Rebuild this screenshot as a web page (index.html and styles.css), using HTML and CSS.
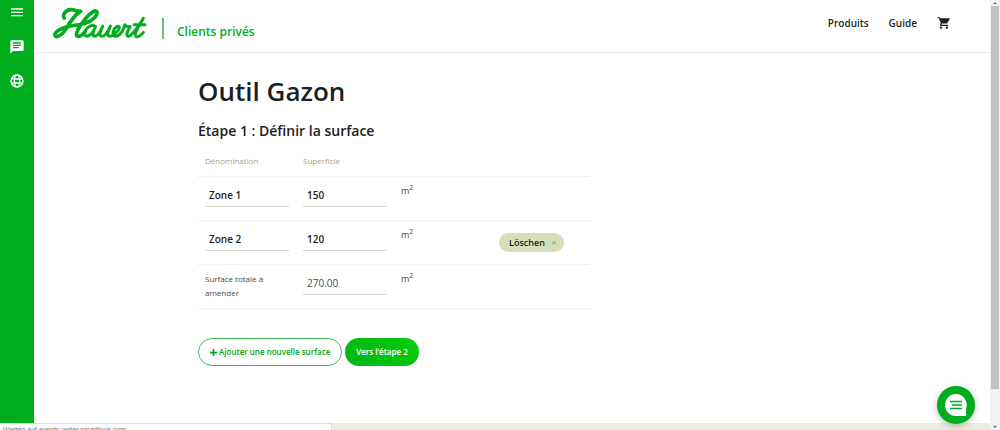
FILE: index.html
```html
<!DOCTYPE html>
<html lang="fr">
<head>
<meta charset="utf-8">
<title>Outil Gazon</title>
<link rel="stylesheet" href="styles.css">
</head>
<body>
<div class="app">
  <nav class="rail" aria-label="Menu">
    <button class="icon-btn" type="button" aria-label="Menu"><svg viewBox="0 0 24 24"><path d="M3 5h18v2H3zm0 5h18v2H3zm0 5h18v2H3z"/></svg></button>
    <button class="icon-btn" type="button" aria-label="Messages"><svg viewBox="0 0 24 24"><path d="M20 2H4c-1.100 0-2 .9-2 2v18l4-4h14c1.100 0 2-.9 2-2V4c0-1.100-.9-2-2-2zM6 5h12v2H6zm0 3.500h12v2H6zM6 12h9v2H6z"/></svg></button>
    <button class="icon-btn" type="button" aria-label="Langue"><svg viewBox="0 0 24 24" class="line"><circle cx="12" cy="12" r="9"/><ellipse cx="12" cy="12" rx="4" ry="9"/><path d="M4 9h16M4 15h16"/></svg></button>
  </nav>
  <div class="page">
    <header class="top">
      <a class="brand" href="#" aria-label="Hauert">
        <svg class="logo" viewBox="158 21 285 98">
          <path class="heavy" d="M240 34C222 46 208 68 197 87C187 105 168 114 164 107C160 98 180 84 204 79C230 74 262 74 282 54C298 38 292 27 280 34C260 46 246 68 234 88"/>
          <path class="heavy" d="M192 54C186 42 196 29 212 28C224 27 230 35 242 33M234 88C227 102 227 110 236 109C244 108 250 102 255 95"/>
          <path d="M286 79C276 72 262 80 256 92C250 106 258 112 268 106C276 101 282 92 287 79C280 94 276 108 284 109C293 109 302 94 309 78C301 93 297 108 305 109C314 110 325 94 332 78C324 94 321 108 328 109C338 109 360 92 359 82C357 73 344 82 341 94C337 110 348 112 358 105C366 99 372 88 376 74C379 80 386 80 392 79C383 94 378 108 386 109C396 109 420 76 432 54C420 74 402 104 410 110C416 112 426 104 432 97M404 74H437"/>
        </svg>
      </a>
      <a class="section" href="#">Clients privés</a>
      <nav class="links"><a href="#">Produits</a><a href="#">Guide</a>
        <a class="cart" href="#" aria-label="Panier"><svg viewBox="0 0 24 24"><path d="M7 18c-1.100 0-2 .9-2 2s.9 2 2 2 2-.9 2-2-.9-2-2-2zM1 2v2h2l3.600 7.600-1.400 2.400C4.500 15.400 5.500 17 7 17h12v-2H7.400l1.200-2h7.400c.8 0 1.400-.4 1.800-1L21.900 5c.3-.6-.2-1-.9-1H5.200l-.9-2zM17 18c-1.100 0-2 .9-2 2s.9 2 2 2 2-.9 2-2-.9-2-2-2z"/></svg></a>
      </nav>
    </header>
    <main class="content">
      <h1>Outil Gazon</h1>
      <h2>Étape 1 : Définir la surface</h2>
      <form>
        <table class="areas">
          <thead><tr><th class="name">Dénomination</th><th class="size">Superficie</th><th class="unit"></th><th></th></tr></thead>
          <tbody>
            <tr><td><input aria-label="Dénomination 1" value="Zone 1"></td><td><input aria-label="Superficie 1" value="150"></td><td>m<sup>2</sup></td><td></td></tr>
            <tr><td><input aria-label="Dénomination 2" value="Zone 2"></td><td><input aria-label="Superficie 2" value="120"></td><td>m<sup>2</sup></td><td><button class="delete" type="button">Löschen <span>×</span></button></td></tr>
            <tr><td><label for="total">Surface totale à amender</label></td><td><input id="total" class="total" value="270.00" readonly></td><td>m<sup>2</sup></td><td></td></tr>
          </tbody>
        </table>
        <div class="buttons">
          <button class="btn outline" type="button"><svg viewBox="0 0 8 8"><path d="M3 0h2v3h3v2H5v3H3V5H0V3h3z"/></svg>Ajouter une nouvelle surface</button>
          <button class="btn solid" type="button">Vers l’étape 2</button>
        </div>
      </form>
    </main>
  </div>
  <div class="scroll" aria-hidden="true"><i class="up"></i><div class="thumb"></div><i class="down"></i></div>
  <div class="footer-strip"></div>
  <div class="status">Warten auf events-writer.smartlook.com</div>
  <button class="chat" type="button" aria-label="Chat"><svg viewBox="0 0 22 22"><path class="bubble" d="M11 0a11 11 0 1 0 0 22h9q2 0 1-2V15A11 11 0 0 0 11 0z"/><path class="bars" d="M5 7.500h12M7 11h10M5 14.500h12"/></svg></button>
</div>
</body>
</html>
```
FILE: styles.css
```css
* { box-sizing: border-box; }
body { margin: 0; font-family: "Open Sans", "Noto Sans", sans-serif; color: #1b1f22; background: #fff; }
a { color: inherit; text-decoration: none; }
button { font-family: inherit; cursor: pointer; }
.app { position: relative; display: flex; height: 100vh; overflow: hidden; }
.rail { width: 34px; background: #00ad1d; border-right: 1px solid #009f14; display: flex; flex-direction: column; align-items: center; gap: 18px; padding-top: 5px; }
.icon-btn { display: block; width: 16px; height: 16px; padding: 0; border: 0; background: none; }
.icon-btn svg { display: block; width: 16px; height: 16px; fill: #fff; }
.icon-btn .line { fill: none; stroke: #fff; stroke-width: 2; }
.page { flex: 1; min-width: 0; }
.top { display: flex; height: 53px; border-bottom: 1px solid #ececec; padding: 7px 39px 0 19px; }
.logo { display: block; width: 94px; height: 33px; fill: none; stroke: #00ad1d; stroke-width: 9; stroke-linecap: round; stroke-linejoin: round; }
.heavy { stroke-width: 11; }
.brand { height: 33px; padding-right: 15px; }
.section { align-self: flex-start; height: 21px; margin-top: 11px; padding-left: 13px; border-left: 2px solid #5fc678; color: #00ad1d; font-size: 12px; font-weight: 600; line-height: 28px; }
.links { display: flex; gap: 20px; margin-left: auto; font-size: 10px; font-weight: 600; line-height: 32px; }
.cart svg { display: block; width: 14px; height: 14px; margin-top: 9px; fill: #1b1f22; }
.content { padding: 20px 24px 0 164px; }
h1 { margin: 0; font-size: 26px; font-weight: 600; line-height: 36px; }
h2 { margin: 12px 0 0; font-size: 14px; font-weight: 600; line-height: 20px; }
.areas { width: 100%; max-width: 392px; margin-top: 5px; border-collapse: collapse; table-layout: fixed; font-size: 9px; line-height: 14px; color: #444b4d; }
th { height: 30px; padding: 0 7px; text-align: left; font-weight: 400; font-size: 8px; color: #a6a67f; }
.name, .size, .unit { width: 98px; }
td { height: 44px; padding: 7px; vertical-align: top; }
tr { border-bottom: 1px solid #eee; }
sup { font-size: 7px; line-height: 0; }
label { font-size: 8px; }
input { display: block; width: 100%; height: 23px; padding: 0 4px; border: 0; border-bottom: 1px solid #d5d8d0; background: none; font: 600 10px "Open Sans", sans-serif; color: #1b1f22; }
.total { font-weight: 400; color: #444b4d; }
.delete { margin-top: 5px; height: 19px; padding: 0 8px 0 10px; border: 0; border-radius: 10px; background: #d6dfba; color: #1b1f22; font-size: 9px; font-weight: 600; }
.delete span { margin-left: 4px; color: #8ca55f; font-weight: 400; }
.buttons { display: flex; gap: 3px; margin-top: 29px; }
.btn { height: 28px; border-radius: 14px; padding: 0 11px; font-size: 8px; font-weight: 600; }
.btn svg { width: 7px; height: 7px; margin-right: 2px; fill: #00a51b; vertical-align: -1px; }
.outline { border: 1px solid #43bd5e; background: #fff; color: #00a51b; }
.solid { border: 0; background: linear-gradient(45deg, #00b51a, #08cc08); color: #fff; }
.scroll { width: 10px; background: #f1f3f3; display: flex; flex-direction: column; align-items: center; }
.thumb { width: 8px; height: 383px; margin-top: 2px; background: #c1c1c1; }
.up, .down { border: 2px solid transparent; }
.up { border-bottom-color: #667; }
.down { margin-top: auto; border-top-color: #667; }
.footer-strip { position: absolute; left: 0; right: 10px; bottom: 0; height: 7px; background: #ebeedc; }
.status { position: absolute; left: 0; bottom: 0; width: 332px; height: 7px; overflow: hidden; padding-left: 3px; border-top: 1px solid #ddd; border-right: 1px solid #ddd; background: #fff; font-family: "Liberation Sans", sans-serif; font-size: 7px; line-height: 11px; color: #777; }
.chat { position: absolute; right: 25px; bottom: 6px; width: 38px; height: 38px; padding: 0; border: 0; border-radius: 50%; background: #00ad1d; box-shadow: 0 2px 6px #0004; }
.chat svg { display: block; width: 22px; height: 22px; margin: auto; }
.bubble { fill: #fff; }
.bars { fill: none; stroke: #00ad1d; stroke-width: 1.500; }
```
